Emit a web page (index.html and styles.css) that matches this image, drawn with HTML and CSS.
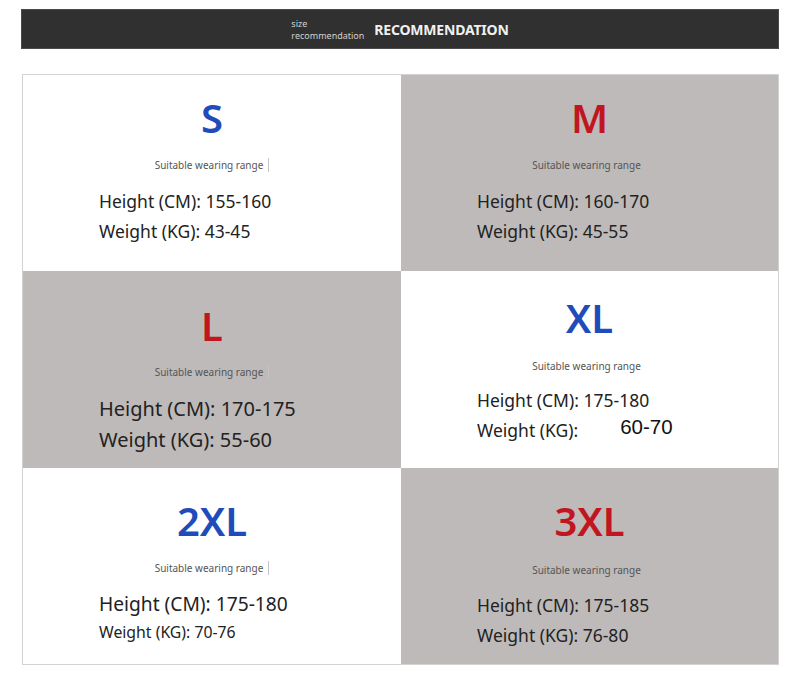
FILE: index.html
```html
<!DOCTYPE html>
<html lang="en">
<head>
<meta charset="utf-8">
<title>Size recommendation</title>
<link rel="stylesheet" href="styles.css">
</head>
<body>
<div class="page">
  <header class="banner">
    <div class="banner-sub">
      <span>size</span>
      <span>recommendation</span>
    </div>
    <div class="banner-title">RECOMMENDATION</div>
  </header>

  <section class="grid">
    <div class="cell light cell-s">
      <div class="size blue">S</div>
      <div class="caption">Suitable wearing range<span class="caret"></span></div>
      <div class="specs">
        <div class="spec">Height (CM): 155-160</div>
        <div class="spec">Weight (KG): 43-45</div>
      </div>
    </div>
    <div class="cell grey cell-m">
      <div class="size red">M</div>
      <div class="caption pad">Suitable wearing range</div>
      <div class="specs">
        <div class="spec">Height (CM): 160-170</div>
        <div class="spec">Weight (KG): 45-55</div>
      </div>
    </div>
    <div class="cell grey cell-l">
      <div class="size red">L</div>
      <div class="caption">Suitable wearing range<span class="caret"></span></div>
      <div class="specs">
        <div class="spec">Height (CM): 170-175</div>
        <div class="spec">Weight (KG): 55-60</div>
      </div>
    </div>
    <div class="cell light cell-xl">
      <div class="size blue">XL</div>
      <div class="caption pad">Suitable wearing range</div>
      <div class="specs">
        <div class="spec">Height (CM): 175-180</div>
        <div class="spec">Weight (KG):<span class="pasted">60-70</span></div>
      </div>
    </div>
    <div class="cell light cell-2xl">
      <div class="size blue">2XL</div>
      <div class="caption">Suitable wearing range<span class="caret"></span></div>
      <div class="specs">
        <div class="spec">Height (CM): 175-180</div>
        <div class="spec">Weight (KG): 70-76</div>
      </div>
    </div>
    <div class="cell grey cell-3xl">
      <div class="size red">3XL</div>
      <div class="caption pad">Suitable wearing range</div>
      <div class="specs">
        <div class="spec">Height (CM): 175-185</div>
        <div class="spec">Weight (KG): 76-80</div>
      </div>
    </div>
  </section>
</div>
</body>
</html>
```
FILE: styles.css
```css
html, body {
  margin: 0;
  padding: 0;
  background: #ffffff;
}

body {
  font-family: "Noto Sans", "Noto Sans CJK SC", sans-serif;
  color: #222222;
}

.page {
  width: 800px;
  height: 684px;
  padding-top: 9px;
  box-sizing: border-box;
}

.banner {
  margin: 0 21px 0 21px;
  height: 40px;
  box-sizing: border-box;
  background: #303030;
  border: 1px solid #4a4a4a;
  display: flex;
  justify-content: center;
  align-items: center;
  gap: 10px;
}

.banner-sub {
  display: flex;
  flex-direction: column;
  font-size: 9px;
  line-height: 12px;
  color: #d0d0d0;
  padding-top: 1px;
}

.banner-title {
  font-size: 14px;
  font-weight: 700;
  color: #f0f0f0;
  letter-spacing: -0.2px;
  line-height: 18px;
  padding-top: 2px;
}

.grid {
  margin: 25px 21px 0 22px;
  border: 1px solid #d2d2d2;
  display: grid;
  grid-template-columns: 378px 377px;
  grid-template-rows: 196px 197px 196px;
}

.cell {
  --pt: 21px;
  --cap-gap: 18px;
  --spec-gap: 14px;
  --spec-size: 17.5px;
  --w-size: 17.5px;
  --line: 30px;
  display: flex;
  flex-direction: column;
  align-items: center;
  padding-top: var(--pt);
  box-sizing: border-box;
}

.light { background: #ffffff; }
.grey { background: #bebab9; }

.size {
  font-size: 40px;
  line-height: 44px;
  font-weight: 600;
}

.blue { color: #1f4cba; }
.red { color: #c1161f; }

.caption {
  margin-top: var(--cap-gap);
  font-size: 10px;
  line-height: 14px;
  color: #555555;
  display: flex;
  align-items: center;
}

.caption.pad {
  padding-right: 6px;
}

.caret {
  display: inline-block;
  width: 1px;
  height: 14px;
  margin-left: 5px;
  background: #c4c4c4;
}

.specs {
  align-self: stretch;
  padding-left: 76px;
  margin-top: var(--spec-gap);
}

.spec {
  font-size: var(--spec-size);
  line-height: var(--line);
  white-space: nowrap;
}

.spec + .spec {
  font-size: var(--w-size);
}

.pasted {
  font-family: "Liberation Sans", Arial, sans-serif;
  font-size: 20.5px;
  color: #111111;
  margin-left: 42px;
  position: relative;
  top: -3px;
}

.cell-l {
  --pt: 33px;
  --cap-gap: 17px;
  --spec-size: 20px;
  --w-size: 20px;
  --line: 31px;
}

.cell-xl {
  --pt: 25px;
  --cap-gap: 19px;
  --spec-gap: 13px;
  --line: 29px;
}

.cell-2xl {
  --pt: 31px;
  --cap-gap: 18px;
  --spec-gap: 14px;
  --spec-size: 19.2px;
  --w-size: 15.8px;
  --line: 29px;
}

.cell-3xl {
  --pt: 31px;
  --cap-gap: 20px;
  --spec-gap: 13px;
}
```
